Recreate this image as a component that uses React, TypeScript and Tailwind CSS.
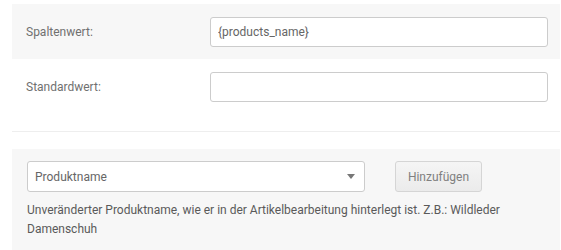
import React from 'react';

const inputCls =
    'h-[30px] w-[338px] rounded-[3px] border border-[#cccccc] bg-white px-[7px] text-[12px] text-[#666666] outline-none';

export default function App() {
    return (
        <div className="min-h-[250px] bg-white pl-[12px] pr-[1px] pt-[4px] font-['Roboto',sans-serif] text-[12px] text-[#707070] antialiased">
            {/* Spaltenwert */}
            <div className="flex h-[55px] items-center justify-between bg-[#f7f7f7] pl-[14px] pr-[12px]">
                <span>Spaltenwert:</span>
                <input className={inputCls} defaultValue="{products_name}" readOnly />
            </div>

            {/* Standardwert */}
            <div className="flex h-[55px] items-center justify-between pl-[14px] pr-[12px]">
                <span>Standardwert:</span>
                <input className={inputCls} defaultValue="" readOnly />
            </div>

            <div className="mt-[17px] border-t border-[#eeeeee]" />

            {/* Platzhalter */}
            <div className="mt-[17px] bg-[#f7f7f7] px-[15px] pt-[12px] pb-[16px]">
                <div className="flex items-center">
                    <div className="flex h-[31px] w-[338px] items-center justify-between rounded-[3px] border border-[#cccccc] bg-white pl-[7px] pr-[9px] text-[#666666]">
                        <span>Produktname</span>
                        <svg width="8" height="5" viewBox="0 0 8 5">
                            <path d="M0 0h8L4 5z" fill="#777777" />
                        </svg>
                    </div>
                    <button className="ml-[30px] h-[31px] w-[87px] rounded-[3px] border border-[#d5d5d5] bg-gradient-to-b from-[#f5f5f5] to-[#ebebeb] text-[12px] text-[#808080]">
                        Hinzufügen
                    </button>
                </div>
                <p className="mt-[9px] w-[500px] leading-[19px] text-[#5a5a5a]">
                    Unveränderter Produktname, wie er in der Artikelbearbeitung hinterlegt ist. Z.B.: Wildleder Damenschuh
                </p>
            </div>
        </div>
    );
}
